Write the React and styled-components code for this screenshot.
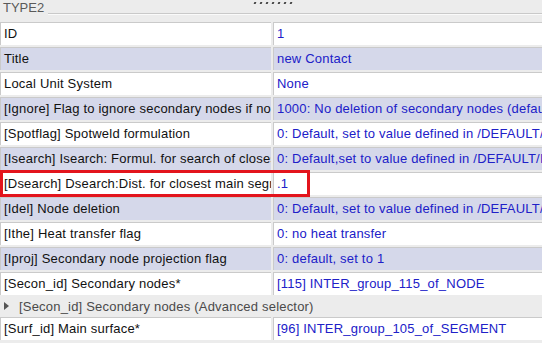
import React from "react";
import styled, { createGlobalStyle } from "styled-components";

const Global = createGlobalStyle`
  html, body { margin: 0; padding: 0; background: #ececec; }
  body { font-family: "Liberation Sans", Arial, sans-serif; }
`;

const Page = styled.div`
  position: relative;
  width: 542px;
  height: 343px;
  overflow: hidden;
  background: #ececec;
`;

const Header = styled.div`
  position: relative;
  height: 22px;
  display: flex;
  align-items: flex-start;
  gap: 4px;
`;

const GroupTitle = styled.span`
  font-size: 13px;
  line-height: 15px;
  color: #5a5a5a;
  padding-left: 3px;
`;

const GroupLine = styled.div`
  flex: 1;
  margin-top: 13px;
  height: 1px;
  background: #c9c9c9;
  border-bottom: 1px solid #fafafa;
`;

const Grip = styled.div`
  position: absolute;
  top: 2px;
  left: 254px;
  display: flex;
  gap: 4px;
`;

const GripDot = styled.span`
  width: 2px;
  height: 2px;
  background: #444;
  transform: skewX(-20deg);
`;

const Table = styled.div`
  display: grid;
  grid-template-columns: 271px 1fr;
  column-gap: 2px;
  row-gap: 2px;
`;

const Cell = styled.div`
  height: 22px;
  line-height: 22px;
  font-size: 13px;
  letter-spacing: 0.2px;
  padding-left: 3px;
  white-space: nowrap;
  overflow: hidden;
  border-top: 1px solid #cacaca;
  border-left: 1px solid #cacaca;
  background: ${(p) => (p.$alt ? "#d5d8ea" : "#ffffff")};
  color: ${(p) => (p.$value ? "#2020c8" : "#111111")};
`;

const SubRow = styled.div`
  grid-column: 1 / -1;
  height: 18px;
  display: flex;
  align-items: center;
  gap: 8px;
  padding-left: 4px;
  font-size: 13px;
  letter-spacing: 0.2px;
  color: #4a4a4a;
  white-space: nowrap;
`;

const Caret = styled.span`
  width: 0;
  height: 0;
  border-top: 4px solid transparent;
  border-bottom: 4px solid transparent;
  border-left: 5px solid #555;
  margin-right: 2px;
`;

const Highlight = styled.div`
  position: absolute;
  left: 0;
  top: 170px;
  width: 304px;
  height: 21px;
  border: 3px solid #e3141c;
  pointer-events: none;
`;

const rows = [
  ["ID", "1"],
  ["Title", "new Contact"],
  ["Local Unit System", "None"],
  ["[Ignore] Flag to ignore secondary nodes if no secondary segment", "1000: No deletion of secondary nodes (default)"],
  ["[Spotflag] Spotweld formulation", "0: Default, set to value defined in /DEFAULT/INTER"],
  ["[Isearch] Isearch: Formul. for search of closest main segment", "0: Default,set to value defined in /DEFAULT/INTER"],
  ["[Dsearch] Dsearch:Dist. for closest main segment search", ".1"],
  ["[Idel] Node deletion", "0: Default, set to value defined in /DEFAULT/INTER"],
  ["[Ithe] Heat transfer flag", "0: no heat transfer"],
  ["[Iproj] Secondary node projection flag", "0: default, set to 1"],
  ["[Secon_id] Secondary nodes*", "[115] INTER_group_115_of_NODE"],
];

export default function App() {
  return (
    <Page>
      <Global />
      <Header>
        <GroupTitle>TYPE2</GroupTitle>
        <GroupLine />
        <Grip>
          {Array.from({ length: 7 }).map((_, i) => (
            <GripDot key={i} />
          ))}
        </Grip>
      </Header>
      <Table>
        {rows.map(([label, value], i) => (
          <React.Fragment key={label}>
            <Cell $alt={i % 2 === 1}>{label}</Cell>
            <Cell $alt={i % 2 === 1} $value>{value}</Cell>
          </React.Fragment>
        ))}
        <SubRow>
          <Caret />
          <span>[Secon_id] Secondary nodes (Advanced selector)</span>
        </SubRow>
        <Cell>[Surf_id] Main surface*</Cell>
        <Cell $value>[96] INTER_group_105_of_SEGMENT</Cell>
      </Table>
      <Highlight />
    </Page>
  );
}
